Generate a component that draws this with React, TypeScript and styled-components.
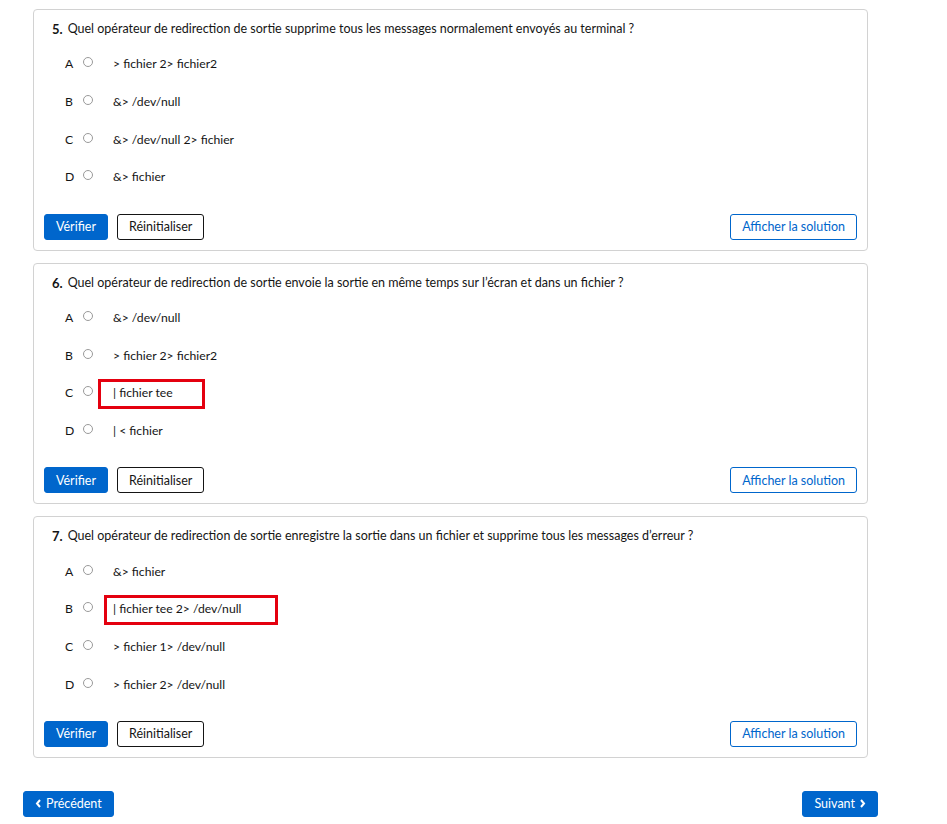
import React from "react";
import styled, { createGlobalStyle } from "styled-components";

const Global = createGlobalStyle`
  html, body { margin: 0; padding: 0; background: #fff; }
  body { font-family: Lato, "Liberation Sans", sans-serif; color: #151515; }
  * { box-sizing: border-box; }
`;

const Page = styled.div`
  width: 855px;
  margin-left: 23px;
  padding-top: 9px;
`;

const Card = styled.section`
  margin: 0 10px 12px;
  border: 1px solid #d2d2d2;
  border-radius: 4px;
  background: #fff;
  padding: 10px 10px 10px;
`;

const Question = styled.div`
  display: flex;
  align-items: center;
  height: 18px;
  padding-left: 8px;
  font-size: 12.5px;
  line-height: 18px;
`;

const Num = styled.span`
  font-weight: 700;
  font-size: 13px;
  margin-right: 5px;
`;

const Options = styled.div`
  margin-top: 7px;
  padding-left: 21px;
`;

const Row = styled.label`
  display: flex;
  align-items: center;
  height: 37.67px;
  font-size: 12.2px;
  position: relative;
`;

const Letter = styled.span`
  width: 18px;
`;

const Radio = styled.span`
  width: 10px;
  height: 10px;
  border: 1px solid #9a9a9a;
  border-radius: 50%;
  margin-top: -3px;
`;

const OptText = styled.span`
  margin-left: 20px;
`;

const Highlight = styled.span<{ $left: number; $width: number }>`
  position: absolute;
  top: 5px;
  height: 30px;
  left: ${(p) => p.$left}px;
  width: ${(p) => p.$width}px;
  border: 3px solid #e4000f;
  pointer-events: none;
`;

const Actions = styled.div`
  display: flex;
  align-items: center;
  gap: 9px;
  margin-top: 18px;
`;

const Btn = styled.button<{ $variant: "primary" | "secondary" | "tertiary" }>`
  height: 26px;
  padding: 0 11px;
  font-family: inherit;
  font-size: 12.5px;
  border-radius: 3px;
  cursor: pointer;
  display: inline-flex;
  align-items: center;
  gap: 4px;
  background: ${(p) => (p.$variant === "primary" ? "#0066cc" : "#fff")};
  color: ${(p) =>
    p.$variant === "primary" ? "#fff" : p.$variant === "tertiary" ? "#0066cc" : "#151515"};
  border: 1px solid
    ${(p) =>
      p.$variant === "primary" ? "#0066cc" : p.$variant === "tertiary" ? "#0066cc" : "#151515"};
`;

const Spacer = styled.div`
  flex: 1;
`;

const Nav = styled.nav`
  display: flex;
  justify-content: space-between;
  margin-top: 33px;
`;

const Chevron = ({ dir }: { dir: "left" | "right" }) => (
  <svg width="7" height="9" viewBox="0 0 7 9" aria-hidden>
    <path
      d={dir === "left" ? "M5 1 L2 4.5 L5 8" : "M2 1 L5 4.5 L2 8"}
      fill="none"
      stroke="#fff"
      strokeWidth="2"
    />
  </svg>
);

type Q = {
  n: number;
  text: string;
  opts: string[];
  hl?: { idx: number; left: number; width: number };
};

const questions: Q[] = [
  {
    n: 5,
    text: "Quel opérateur de redirection de sortie supprime tous les messages normalement envoyés au terminal ?",
    opts: ["> fichier 2> fichier2", "&> /dev/null", "&> /dev/null 2> fichier", "&> fichier"],
  },
  {
    n: 6,
    text: "Quel opérateur de redirection de sortie envoie la sortie en même temps sur l’écran et dans un fichier ?",
    opts: ["&> /dev/null", "> fichier 2> fichier2", "| fichier tee", "| < fichier"],
    hl: { idx: 2, left: 33, width: 107 },
  },
  {
    n: 7,
    text: "Quel opérateur de redirection de sortie enregistre la sortie dans un fichier et supprime tous les messages d’erreur ?",
    opts: ["&> fichier", "| fichier tee 2> /dev/null", "> fichier 1> /dev/null", "> fichier 2> /dev/null"],
    hl: { idx: 1, left: 39, width: 174 },
  },
];

export default function App() {
  return (
    <>
      <Global />
      <Page>
        {questions.map((q) => (
          <Card key={q.n}>
            <Question>
              <Num>{q.n}.</Num>
              {q.text}
            </Question>
            <Options>
              {q.opts.map((o, i) => (
                <Row key={i}>
                  <Letter>{"ABCD"[i]}</Letter>
                  <Radio />
                  <OptText>{o}</OptText>
                  {q.hl && q.hl.idx === i && <Highlight $left={q.hl.left} $width={q.hl.width} />}
                </Row>
              ))}
            </Options>
            <Actions>
              <Btn $variant="primary">Vérifier</Btn>
              <Btn $variant="secondary">Réinitialiser</Btn>
              <Spacer />
              <Btn $variant="tertiary">Afficher la solution</Btn>
            </Actions>
          </Card>
        ))}
        <Nav>
          <Btn $variant="primary">
            <Chevron dir="left" />
            Précédent
          </Btn>
          <Btn $variant="primary">
            Suivant
            <Chevron dir="right" />
          </Btn>
        </Nav>
      </Page>
    </>
  );
}
